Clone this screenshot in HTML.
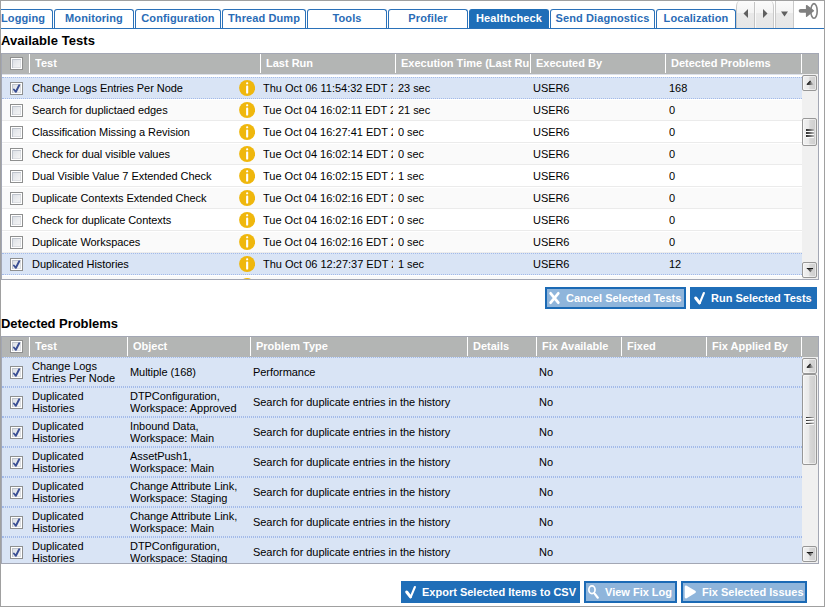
<!DOCTYPE html>
<html><head><meta charset="utf-8"><title>Healthcheck</title>
<style>
html,body{margin:0;padding:0;background:#fff;}
body{width:825px;height:607px;overflow:hidden;position:relative;font-family:"Liberation Sans",Arial,sans-serif;font-size:11px;color:#000;}
#frame{position:absolute;left:0;top:0;width:823px;height:605px;border:1px solid #a0a0a0;}
.abs{position:absolute}
.tab{position:absolute;top:9px;height:19px;border:1px solid #2a71b9;border-bottom:none;border-radius:3px 3px 0 0;background:#fff;color:#2a6cb6;font-weight:bold;font-size:11px;line-height:16px;text-align:center;letter-spacing:0.1px;box-sizing:border-box;white-space:nowrap;overflow:hidden}
.tab.on{background:#1f6eb8;color:#fff;border-color:#1f6eb8}
#tabline{position:absolute;left:1px;top:28px;width:823px;height:1px;background:#2a71b9}
h2{position:absolute;margin:0;font-size:13px;font-weight:bold;line-height:15px;left:1px;letter-spacing:0.05px;white-space:nowrap}
.grid{position:absolute;left:1px;width:816px;border:1px solid #a3a7b4;overflow:hidden;background:#fff}
.hd{position:absolute;left:0;top:0;width:816px;height:20px;background:#b3b5b4;border-bottom:1px solid #dde1ea;box-sizing:content-box}
.hd span{position:absolute;top:0;line-height:19px;color:#fff;font-weight:bold;font-size:11px;white-space:nowrap;overflow:hidden}
.hd i{position:absolute;top:0;width:1px;height:19px;background:#fff}
.row{position:absolute;left:0;width:800px;border:solid #ebebeb;border-width:1px 0;border-top-color:#fff;box-sizing:border-box;background:#fff}
.row.alt{background:#fafafa}
.row.sel{background:#d9e4f5;border:dotted #a3bae9;border-width:1px 0}
.c{position:absolute;white-space:nowrap;overflow:hidden;line-height:12px;letter-spacing:-0.05px}
.c.d{letter-spacing:0}
.cb{position:absolute;width:11px;height:11px;border:1px solid #8e8f8f;background:#fff}
.cb b{position:absolute;left:1px;top:1px;width:9px;height:9px;background:linear-gradient(135deg,#d9dde4 0%,#e9ebee 50%,#f6f6f6 100%);box-shadow:inset 1px 1px 0 #bfc4cc,inset -1px -1px 0 #dcdee2}
.cb svg{position:absolute;left:0;top:0}
.info{position:absolute;width:16px;height:16px}
.sb{position:absolute;right:0;width:16px;background:#f0f0f0}
.sbtn{position:absolute;left:0;width:13px;height:14px;border:1px solid #979797;border-radius:2px;background:linear-gradient(90deg,#f1f1f1 0%,#e9e9e9 45%,#d8d8d8 52%,#cdcdcd 100%);box-shadow:inset 0 0 0 1px rgba(255,255,255,.5);box-sizing:content-box}
.sbtn svg{position:absolute;left:0;top:0}
.thumb{position:absolute;left:0;width:13px;border:1px solid #979797;border-radius:2px;background:linear-gradient(90deg,#f1f1f1 0%,#e9e9e9 45%,#d8d8d8 52%,#cdcdcd 100%);box-shadow:inset 0 0 0 1px rgba(255,255,255,.5)}
.grip{position:absolute;left:3px;width:8px;height:9px;margin-top:-3px;top:50%}
.grip i{position:absolute;left:0;width:8px;height:1.7px;background:linear-gradient(90deg,#2a2a2a,#666 50%,#b8b8b8);box-shadow:0 1px 0 rgba(255,255,255,.9)}
.btn{position:absolute;height:22px;box-sizing:border-box;border:2px solid #1f6eb8;background:#1f6eb8;color:#fff;font-weight:bold;font-size:11px;line-height:18px;white-space:nowrap}
.btn.dis{background:#8fb5db;border-color:#1b6ab5}
.btn span{position:absolute;top:0}
.btn svg{position:absolute}
</style></head><body><svg width="0" height="0" style="position:absolute"><defs><linearGradient id="ag" x1="0" x2="1" y1="0" y2="0"><stop offset="0" stop-color="#222"/><stop offset="0.4" stop-color="#555"/><stop offset="0.7" stop-color="#a0a0a0"/><stop offset="1" stop-color="#d6d6d6"/></linearGradient></defs></svg><div id="frame"></div>

<div class="tab" style="left:1px;width:52px;border-left:none;border-radius:0 3px 0 0;text-align:right;padding-right:7px">Logging</div>
<div class="tab" style="left:54px;width:80px">Monitoring</div>
<div class="tab" style="left:135px;width:86px">Configuration</div>
<div class="tab" style="left:222px;width:84px">Thread Dump</div>
<div class="tab" style="left:307px;width:80px">Tools</div>
<div class="tab" style="left:388px;width:80px">Profiler</div>
<div class="tab on" style="left:469px;width:80px">Healthcheck</div>
<div class="tab" style="left:550px;width:105px">Send Diagnostics</div>
<div class="tab" style="left:656px;width:80px">Localization</div>
<div id="tabline"></div>
<div class="abs" style="left:736px;top:1px;width:38px;height:27px;box-sizing:border-box;border:1px solid #c9c9c9;border-bottom:none;border-top:none;border-radius:3px 3px 0 0/6px 6px 0 0;background:linear-gradient(#fbfbfb 0,#f3f3f3 44%,#e9e9e9 46%,#e6e6e6 100%)"></div>
<div class="abs" style="left:754px;top:2px;width:1px;height:26px;background:#c4c4c4"></div>
<div class="abs" style="left:755px;top:2px;width:1px;height:26px;background:#fafafa"></div>
<svg class="abs" style="left:736px;top:1px" width="38" height="27" viewBox="0 0 38 27"><path d="M7.5 12.5 L12 8 L12 17 Z" fill="#5f5f5f"/><path d="M31.5 12.5 L27 8 L27 17 Z" fill="#5f5f5f"/></svg>
<div class="abs" style="left:775px;top:1px;width:19px;height:27px;box-sizing:border-box;border-left:1px solid #c9c9c9;border-right:1px solid #c9c9c9;background:linear-gradient(#fbfbfb 0,#f3f3f3 44%,#e9e9e9 46%,#e6e6e6 100%)"></div>
<svg class="abs" style="left:775px;top:1px" width="19" height="27" viewBox="0 0 19 27"><path d="M6 10.5 L13 10.5 L9.5 15.5 Z" fill="#5f5f5f"/></svg>
<svg class="abs" style="left:796px;top:1px" width="26" height="22" viewBox="0 0 26 22"><ellipse cx="18" cy="9.9" rx="3.2" ry="7.3" fill="none" stroke="#808080" stroke-width="1.6"/><path d="M4.6 9.85 L11 9.85" stroke="#808080" stroke-width="3.8" stroke-linecap="round"/><path d="M10.6 4.6 L17.4 9.8 L10.6 15.2 Z" fill="#808080" stroke="#808080" stroke-width="1.4" stroke-linejoin="round"/></svg>

<h2 style="top:33px">Available Tests</h2>
<div class="grid" style="top:53px;height:225px">
<div class="hd">
<div class="cb" style="left:8px;top:3px"><b></b></div>
<i style="left:27px"></i>
<span style="left:33px;width:224px">Test</span>
<i style="left:258px"></i>
<span style="left:264px;width:128px">Last Run</span>
<i style="left:393px"></i>
<span style="left:399px;width:128px">Execution Time (Last Run)</span>
<i style="left:528px"></i>
<span style="left:534px;width:128px">Executed By</span>
<i style="left:663px"></i>
<span style="left:669px;width:129px">Detected Problems</span>
<i style="left:799px"></i>
</div>
<div class="row sel" style="top:23px;height:22px">
<div class="cb" style="left:8px;top:4px"><b></b><svg width="11" height="11" viewBox="0 0 11 11"><path d="M2.9 6.5 L4.9 8.8 L8.2 2.3" fill="none" stroke="#3b4f94" stroke-width="1.9" stroke-linecap="round" stroke-linejoin="round"/></svg></div>
<div class="c" style="left:30px;top:4px;width:204px">Change Logs Entries Per Node</div>
<svg class="info" style="left:237px;top:2px" width="16" height="16" viewBox="0 0 16 16"><circle cx="8.1" cy="8" r="8" fill="#efb70d"/><rect x="7.1" y="2.3" width="2.1" height="2" rx="0.9" fill="#fff"/><rect x="7.1" y="5.6" width="2.1" height="8" rx="0.9" fill="#fff"/></svg>
<div class="c d" style="left:261px;top:4px;width:130px">Thu Oct 06 11:54:32 EDT 2016</div>
<div class="c" style="left:396px;top:4px;width:131px">23 sec</div>
<div class="c" style="left:531px;top:4px;width:131px">USER6</div>
<div class="c" style="left:667px;top:4px;width:131px">168</div>
</div>
<div class="row alt" style="top:45px;height:22px">
<div class="cb" style="left:8px;top:4px"><b></b></div>
<div class="c" style="left:30px;top:4px;width:204px">Search for duplictaed edges</div>
<svg class="info" style="left:237px;top:2px" width="16" height="16" viewBox="0 0 16 16"><circle cx="8.1" cy="8" r="8" fill="#efb70d"/><rect x="7.1" y="2.3" width="2.1" height="2" rx="0.9" fill="#fff"/><rect x="7.1" y="5.6" width="2.1" height="8" rx="0.9" fill="#fff"/></svg>
<div class="c d" style="left:261px;top:4px;width:130px">Tue Oct 04 16:02:11 EDT 2016</div>
<div class="c" style="left:396px;top:4px;width:131px">21 sec</div>
<div class="c" style="left:531px;top:4px;width:131px">USER6</div>
<div class="c" style="left:667px;top:4px;width:131px">0</div>
</div>
<div class="row" style="top:67px;height:22px">
<div class="cb" style="left:8px;top:4px"><b></b></div>
<div class="c" style="left:30px;top:4px;width:204px">Classification Missing a Revision</div>
<svg class="info" style="left:237px;top:2px" width="16" height="16" viewBox="0 0 16 16"><circle cx="8.1" cy="8" r="8" fill="#efb70d"/><rect x="7.1" y="2.3" width="2.1" height="2" rx="0.9" fill="#fff"/><rect x="7.1" y="5.6" width="2.1" height="8" rx="0.9" fill="#fff"/></svg>
<div class="c d" style="left:261px;top:4px;width:130px">Tue Oct 04 16:27:41 EDT 2016</div>
<div class="c" style="left:396px;top:4px;width:131px">0 sec</div>
<div class="c" style="left:531px;top:4px;width:131px">USER6</div>
<div class="c" style="left:667px;top:4px;width:131px">0</div>
</div>
<div class="row alt" style="top:89px;height:22px">
<div class="cb" style="left:8px;top:4px"><b></b></div>
<div class="c" style="left:30px;top:4px;width:204px">Check for dual visible values</div>
<svg class="info" style="left:237px;top:2px" width="16" height="16" viewBox="0 0 16 16"><circle cx="8.1" cy="8" r="8" fill="#efb70d"/><rect x="7.1" y="2.3" width="2.1" height="2" rx="0.9" fill="#fff"/><rect x="7.1" y="5.6" width="2.1" height="8" rx="0.9" fill="#fff"/></svg>
<div class="c d" style="left:261px;top:4px;width:130px">Tue Oct 04 16:02:14 EDT 2016</div>
<div class="c" style="left:396px;top:4px;width:131px">0 sec</div>
<div class="c" style="left:531px;top:4px;width:131px">USER6</div>
<div class="c" style="left:667px;top:4px;width:131px">0</div>
</div>
<div class="row" style="top:111px;height:22px">
<div class="cb" style="left:8px;top:4px"><b></b></div>
<div class="c" style="left:30px;top:4px;width:204px">Dual Visible Value 7 Extended Check</div>
<svg class="info" style="left:237px;top:2px" width="16" height="16" viewBox="0 0 16 16"><circle cx="8.1" cy="8" r="8" fill="#efb70d"/><rect x="7.1" y="2.3" width="2.1" height="2" rx="0.9" fill="#fff"/><rect x="7.1" y="5.6" width="2.1" height="8" rx="0.9" fill="#fff"/></svg>
<div class="c d" style="left:261px;top:4px;width:130px">Tue Oct 04 16:02:15 EDT 2016</div>
<div class="c" style="left:396px;top:4px;width:131px">1 sec</div>
<div class="c" style="left:531px;top:4px;width:131px">USER6</div>
<div class="c" style="left:667px;top:4px;width:131px">0</div>
</div>
<div class="row alt" style="top:133px;height:22px">
<div class="cb" style="left:8px;top:4px"><b></b></div>
<div class="c" style="left:30px;top:4px;width:204px">Duplicate Contexts Extended Check</div>
<svg class="info" style="left:237px;top:2px" width="16" height="16" viewBox="0 0 16 16"><circle cx="8.1" cy="8" r="8" fill="#efb70d"/><rect x="7.1" y="2.3" width="2.1" height="2" rx="0.9" fill="#fff"/><rect x="7.1" y="5.6" width="2.1" height="8" rx="0.9" fill="#fff"/></svg>
<div class="c d" style="left:261px;top:4px;width:130px">Tue Oct 04 16:02:16 EDT 2016</div>
<div class="c" style="left:396px;top:4px;width:131px">0 sec</div>
<div class="c" style="left:531px;top:4px;width:131px">USER6</div>
<div class="c" style="left:667px;top:4px;width:131px">0</div>
</div>
<div class="row" style="top:155px;height:22px">
<div class="cb" style="left:8px;top:4px"><b></b></div>
<div class="c" style="left:30px;top:4px;width:204px">Check for duplicate Contexts</div>
<svg class="info" style="left:237px;top:2px" width="16" height="16" viewBox="0 0 16 16"><circle cx="8.1" cy="8" r="8" fill="#efb70d"/><rect x="7.1" y="2.3" width="2.1" height="2" rx="0.9" fill="#fff"/><rect x="7.1" y="5.6" width="2.1" height="8" rx="0.9" fill="#fff"/></svg>
<div class="c d" style="left:261px;top:4px;width:130px">Tue Oct 04 16:02:16 EDT 2016</div>
<div class="c" style="left:396px;top:4px;width:131px">0 sec</div>
<div class="c" style="left:531px;top:4px;width:131px">USER6</div>
<div class="c" style="left:667px;top:4px;width:131px">0</div>
</div>
<div class="row alt" style="top:177px;height:22px">
<div class="cb" style="left:8px;top:4px"><b></b></div>
<div class="c" style="left:30px;top:4px;width:204px">Duplicate Workspaces</div>
<svg class="info" style="left:237px;top:2px" width="16" height="16" viewBox="0 0 16 16"><circle cx="8.1" cy="8" r="8" fill="#efb70d"/><rect x="7.1" y="2.3" width="2.1" height="2" rx="0.9" fill="#fff"/><rect x="7.1" y="5.6" width="2.1" height="8" rx="0.9" fill="#fff"/></svg>
<div class="c d" style="left:261px;top:4px;width:130px">Tue Oct 04 16:02:16 EDT 2016</div>
<div class="c" style="left:396px;top:4px;width:131px">0 sec</div>
<div class="c" style="left:531px;top:4px;width:131px">USER6</div>
<div class="c" style="left:667px;top:4px;width:131px">0</div>
</div>
<div class="row sel" style="top:199px;height:22px">
<div class="cb" style="left:8px;top:4px"><b></b><svg width="11" height="11" viewBox="0 0 11 11"><path d="M2.9 6.5 L4.9 8.8 L8.2 2.3" fill="none" stroke="#3b4f94" stroke-width="1.9" stroke-linecap="round" stroke-linejoin="round"/></svg></div>
<div class="c" style="left:30px;top:4px;width:204px">Duplicated Histories</div>
<svg class="info" style="left:237px;top:2px" width="16" height="16" viewBox="0 0 16 16"><circle cx="8.1" cy="8" r="8" fill="#efb70d"/><rect x="7.1" y="2.3" width="2.1" height="2" rx="0.9" fill="#fff"/><rect x="7.1" y="5.6" width="2.1" height="8" rx="0.9" fill="#fff"/></svg>
<div class="c d" style="left:261px;top:4px;width:130px">Thu Oct 06 12:27:37 EDT 2016</div>
<div class="c" style="left:396px;top:4px;width:131px">1 sec</div>
<div class="c" style="left:531px;top:4px;width:131px">USER6</div>
<div class="c" style="left:667px;top:4px;width:131px">12</div>
</div>
<div class="row alt" style="top:221px;height:22px">
<div class="cb" style="left:8px;top:4px"><b></b></div>
<div class="c" style="left:30px;top:4px;width:204px">Duplicated Assets</div>
<svg class="info" style="left:237px;top:2px" width="16" height="16" viewBox="0 0 16 16"><circle cx="8.1" cy="8" r="8" fill="#efb70d"/><rect x="7.1" y="2.3" width="2.1" height="2" rx="0.9" fill="#fff"/><rect x="7.1" y="5.6" width="2.1" height="8" rx="0.9" fill="#fff"/></svg>
<div class="c d" style="left:261px;top:4px;width:130px">Tue Oct 04 16:02:17 EDT 2016</div>
<div class="c" style="left:396px;top:4px;width:131px">0 sec</div>
<div class="c" style="left:531px;top:4px;width:131px">USER6</div>
<div class="c" style="left:667px;top:4px;width:131px">0</div>
</div>
<div class="sb" style="top:20px;height:205px"><div class="sbtn" style="top:1px"><svg width="13" height="14" viewBox="0 0 13 14"><path d="M3.8 9 L7.5 5 L11.2 9 Z" fill="url(#ag)"/><path d="M3.9 8.6 L7.5 4.8" stroke="#1a1a1a" stroke-width="1.1" fill="none"/></svg></div><div class="thumb" style="top:44px;height:26px"><div class="grip"><i style="top:0"></i><i style="top:3px"></i><i style="top:6px"></i></div></div><div class="sbtn" style="top:188px"><svg width="13" height="14" viewBox="0 0 13 14"><path d="M3.8 5.3 L11.2 5.3 L7.5 9.2 Z" fill="url(#ag)"/><path d="M3.8 5.5 L10 5.5" stroke="#1a1a1a" stroke-width="1" fill="none"/></svg></div></div>
</div>
<div class="btn dis" style="left:545px;top:287px;width:141px"><svg style="left:0;top:0" width="16" height="18" viewBox="0 0 16 18"><path d="M3.6 4.3 L11.3 13.7 M11.3 4.3 L3.6 13.7" stroke="#fff" stroke-width="2.7" fill="none" stroke-linecap="round"/></svg><span style="left:19px">Cancel Selected Tests</span></div>
<div class="btn" style="left:690px;top:287px;width:127px"><svg style="left:0;top:0" width="16" height="18" viewBox="0 0 16 18"><path d="M3.7 9 L7.5 13.9" stroke="#fff" stroke-width="3" fill="none" stroke-linecap="round"/><path d="M7.7 14.2 L11.9 4" stroke="#fff" stroke-width="2.1" fill="none" stroke-linecap="round"/></svg><span style="left:19px">Run Selected Tests</span></div>

<h2 style="top:316px;letter-spacing:-0.05px">Detected Problems</h2>
<div class="grid" style="top:336px;height:226px">
<div class="hd" style="border-bottom:none;height:20px">
<div class="cb" style="left:8px;top:3px"><b></b><svg width="11" height="11" viewBox="0 0 11 11"><path d="M2.9 6.5 L4.9 8.8 L8.2 2.3" fill="none" stroke="#3b4f94" stroke-width="1.9" stroke-linecap="round" stroke-linejoin="round"/></svg></div>
<i style="left:27px"></i>
<span style="left:33px;width:91px">Test</span>
<i style="left:125px"></i>
<span style="left:131px;width:116px">Object</span>
<i style="left:248px"></i>
<span style="left:254px;width:210px">Problem Type</span>
<i style="left:465px"></i>
<span style="left:471px;width:62px">Details</span>
<i style="left:534px"></i>
<span style="left:540px;width:78px">Fix Available</span>
<i style="left:619px"></i>
<span style="left:625px;width:78px">Fixed</span>
<i style="left:704px"></i>
<span style="left:710px;width:88px">Fix Applied By</span>
<i style="left:799px"></i>
</div>
<div class="row sel" style="top:20px;height:30px">
<div class="cb" style="left:8px;top:8px"><b></b><svg width="11" height="11" viewBox="0 0 11 11"><path d="M2.9 6.5 L4.9 8.8 L8.2 2.3" fill="none" stroke="#3b4f94" stroke-width="1.9" stroke-linecap="round" stroke-linejoin="round"/></svg></div>
<div class="c" style="left:30px;top:2px;width:94px">Change Logs<br>Entries Per Node</div>
<div class="c" style="left:128px;top:8px;width:119px">Multiple (168)</div>
<div class="c" style="left:251px;top:8px;width:213px">Performance</div>
<div class="c" style="left:537px;top:8px;width:81px">No</div>
</div>
<div class="row sel" style="top:50px;height:30px">
<div class="cb" style="left:8px;top:8px"><b></b><svg width="11" height="11" viewBox="0 0 11 11"><path d="M2.9 6.5 L4.9 8.8 L8.2 2.3" fill="none" stroke="#3b4f94" stroke-width="1.9" stroke-linecap="round" stroke-linejoin="round"/></svg></div>
<div class="c" style="left:30px;top:2px;width:94px">Duplicated<br>Histories</div>
<div class="c" style="left:128px;top:2px;width:119px">DTPConfiguration,<br>Workspace: Approved</div>
<div class="c" style="left:251px;top:8px;width:213px">Search for duplicate entries in the history</div>
<div class="c" style="left:537px;top:8px;width:81px">No</div>
</div>
<div class="row sel" style="top:80px;height:30px">
<div class="cb" style="left:8px;top:8px"><b></b><svg width="11" height="11" viewBox="0 0 11 11"><path d="M2.9 6.5 L4.9 8.8 L8.2 2.3" fill="none" stroke="#3b4f94" stroke-width="1.9" stroke-linecap="round" stroke-linejoin="round"/></svg></div>
<div class="c" style="left:30px;top:2px;width:94px">Duplicated<br>Histories</div>
<div class="c" style="left:128px;top:2px;width:119px">Inbound Data,<br>Workspace: Main</div>
<div class="c" style="left:251px;top:8px;width:213px">Search for duplicate entries in the history</div>
<div class="c" style="left:537px;top:8px;width:81px">No</div>
</div>
<div class="row sel" style="top:110px;height:30px">
<div class="cb" style="left:8px;top:8px"><b></b><svg width="11" height="11" viewBox="0 0 11 11"><path d="M2.9 6.5 L4.9 8.8 L8.2 2.3" fill="none" stroke="#3b4f94" stroke-width="1.9" stroke-linecap="round" stroke-linejoin="round"/></svg></div>
<div class="c" style="left:30px;top:2px;width:94px">Duplicated<br>Histories</div>
<div class="c" style="left:128px;top:2px;width:119px">AssetPush1,<br>Workspace: Main</div>
<div class="c" style="left:251px;top:8px;width:213px">Search for duplicate entries in the history</div>
<div class="c" style="left:537px;top:8px;width:81px">No</div>
</div>
<div class="row sel" style="top:140px;height:30px">
<div class="cb" style="left:8px;top:8px"><b></b><svg width="11" height="11" viewBox="0 0 11 11"><path d="M2.9 6.5 L4.9 8.8 L8.2 2.3" fill="none" stroke="#3b4f94" stroke-width="1.9" stroke-linecap="round" stroke-linejoin="round"/></svg></div>
<div class="c" style="left:30px;top:2px;width:94px">Duplicated<br>Histories</div>
<div class="c" style="left:128px;top:2px;width:119px">Change Attribute Link,<br>Workspace: Staging</div>
<div class="c" style="left:251px;top:8px;width:213px">Search for duplicate entries in the history</div>
<div class="c" style="left:537px;top:8px;width:81px">No</div>
</div>
<div class="row sel" style="top:170px;height:30px">
<div class="cb" style="left:8px;top:8px"><b></b><svg width="11" height="11" viewBox="0 0 11 11"><path d="M2.9 6.5 L4.9 8.8 L8.2 2.3" fill="none" stroke="#3b4f94" stroke-width="1.9" stroke-linecap="round" stroke-linejoin="round"/></svg></div>
<div class="c" style="left:30px;top:2px;width:94px">Duplicated<br>Histories</div>
<div class="c" style="left:128px;top:2px;width:119px">Change Attribute Link,<br>Workspace: Main</div>
<div class="c" style="left:251px;top:8px;width:213px">Search for duplicate entries in the history</div>
<div class="c" style="left:537px;top:8px;width:81px">No</div>
</div>
<div class="row sel" style="top:200px;height:30px">
<div class="cb" style="left:8px;top:8px"><b></b><svg width="11" height="11" viewBox="0 0 11 11"><path d="M2.9 6.5 L4.9 8.8 L8.2 2.3" fill="none" stroke="#3b4f94" stroke-width="1.9" stroke-linecap="round" stroke-linejoin="round"/></svg></div>
<div class="c" style="left:30px;top:2px;width:94px">Duplicated<br>Histories</div>
<div class="c" style="left:128px;top:2px;width:119px">DTPConfiguration,<br>Workspace: Staging</div>
<div class="c" style="left:251px;top:8px;width:213px">Search for duplicate entries in the history</div>
<div class="c" style="left:537px;top:8px;width:81px">No</div>
</div>
<div class="sb" style="top:20px;height:206px"><div class="sbtn" style="top:1px"><svg width="13" height="14" viewBox="0 0 13 14"><path d="M3.8 9 L7.5 5 L11.2 9 Z" fill="url(#ag)"/><path d="M3.9 8.6 L7.5 4.8" stroke="#1a1a1a" stroke-width="1.1" fill="none"/></svg></div><div class="thumb" style="top:17px;height:89px"><div class="grip"><i style="top:0"></i><i style="top:3px"></i><i style="top:6px"></i></div></div><div class="sbtn" style="top:189px"><svg width="13" height="14" viewBox="0 0 13 14"><path d="M3.8 5.3 L11.2 5.3 L7.5 9.2 Z" fill="url(#ag)"/><path d="M3.8 5.5 L10 5.5" stroke="#1a1a1a" stroke-width="1" fill="none"/></svg></div></div>
</div>
<div class="btn" style="left:401px;top:581px;width:179px"><svg style="left:0;top:0" width="16" height="18" viewBox="0 0 16 18"><path d="M3.7 9 L7.5 13.9" stroke="#fff" stroke-width="3" fill="none" stroke-linecap="round"/><path d="M7.7 14.2 L11.9 4" stroke="#fff" stroke-width="2.1" fill="none" stroke-linecap="round"/></svg><span style="left:19px">Export Selected Items to CSV</span></div>
<div class="btn dis" style="left:584px;top:581px;width:93px"><svg style="left:0;top:0" width="16" height="18" viewBox="0 0 16 18"><ellipse cx="5.95" cy="6.8" rx="3.1" ry="3.9" stroke="#fff" stroke-width="1.7" fill="none"/><path d="M8.4 10.4 L11.8 14.7" stroke="#fff" stroke-width="2.2" stroke-linecap="round"/></svg><span style="left:19px">View Fix Log</span></div>
<div class="btn dis" style="left:681px;top:581px;width:126px"><svg style="left:0;top:0" width="16" height="18" viewBox="0 0 16 18"><path d="M3 3.8 L11.6 8.95 L3 14.1 Z" fill="#fff" stroke="#fff" stroke-width="2.6" stroke-linejoin="round"/></svg><span style="left:19px">Fix Selected Issues</span></div>

</body></html>
